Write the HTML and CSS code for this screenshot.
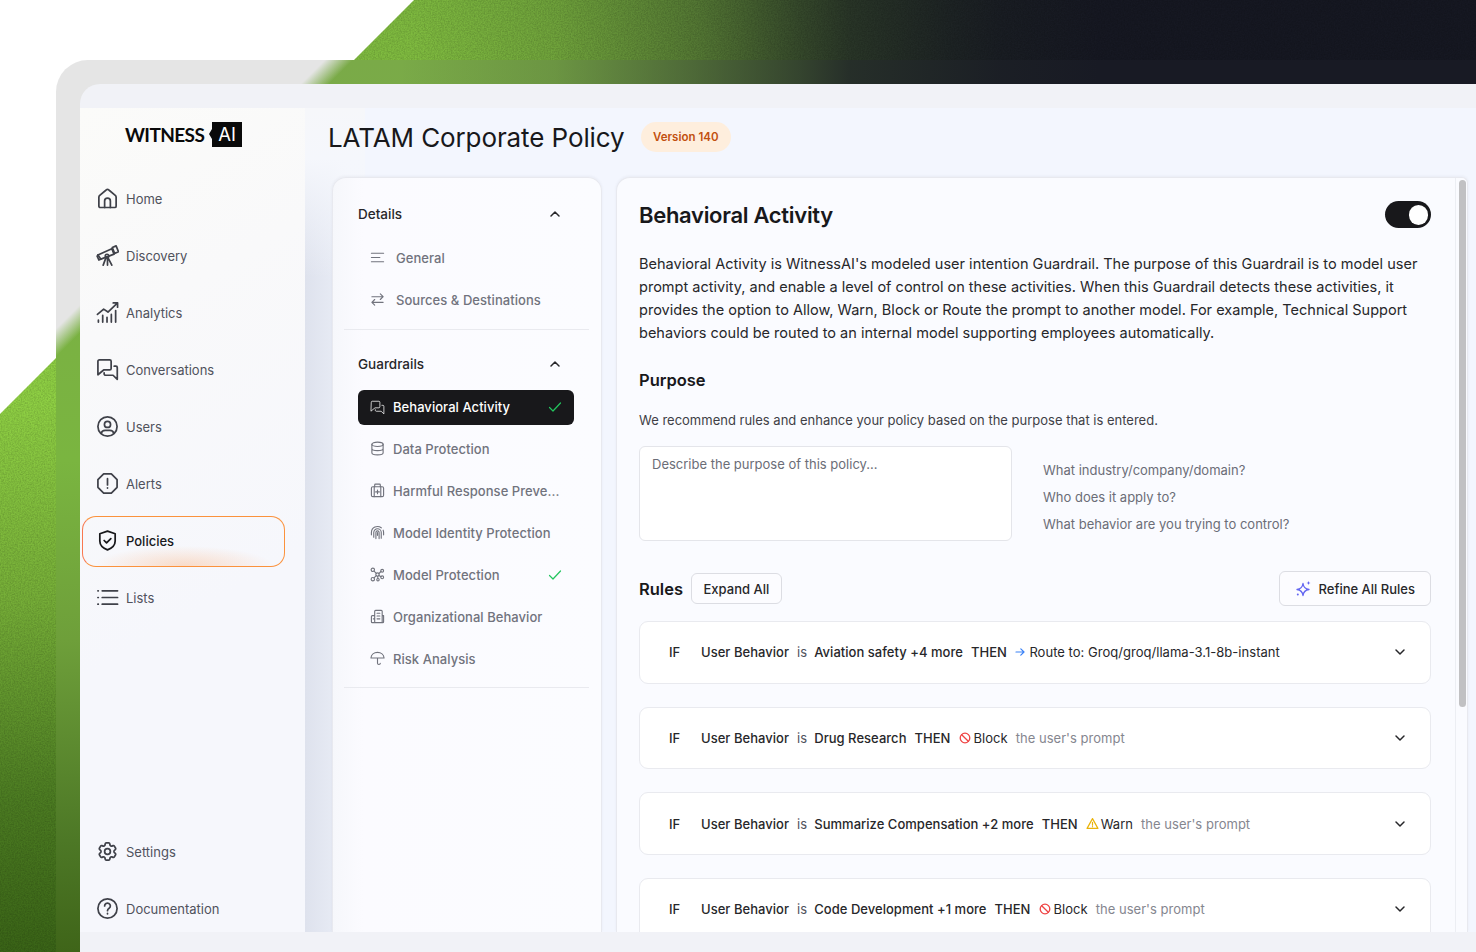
FILE: index.html
```html
<!DOCTYPE html>
<html lang="en">
<head>
<meta charset="utf-8">
<title>LATAM Corporate Policy</title>
<link rel="stylesheet" href="styles.css">
</head>
<body>
<div class="backdrop"></div>
<svg class="noise" width="1476" height="952" aria-hidden="true"><filter id="grain"><feTurbulence type="fractalNoise" baseFrequency="0.7" numOctaves="2" seed="4"/><feColorMatrix values="0 0 0 0 0  0 0 0 0 0  0 0 0 0 0  0.9 0 0 0 -0.28"/></filter><rect width="1476" height="952" filter="url(#grain)"/></svg>
<div class="frame">
  <div class="window">
    <div class="app">
      <aside class="sidebar">
        <div class="logo"><span class="logo-word">WITNESS</span><span class="logo-ai">AI</span></div>
        <nav class="nav">
          <a class="nav-item"><svg class="nav-icon" viewBox="0 0 24 24"><path d="M3 20V10.600c0-.8.3-1.400.9-1.900l6.700-5.600c.8-.7 2-.7 2.800 0l6.700 5.600c.6.5.9 1.100.9 1.900V20c0 .8-.6 1.400-1.400 1.400H4.400C3.600 21.400 3 20.800 3 20Z"/><path d="M9 21.400V14.500c0-1.700 1.300-3 3-3s3 1.300 3 3v6.900"/></svg>Home</a>
          <a class="nav-item"><svg class="nav-icon" viewBox="0 0 24 24"><path d="M2 11.500 16.500 5l2.300 5.600-13.700 5.200Z"/><path d="M17 3.700 21 2l2.400 6-4 1.800ZM2 11.500l-.8 1.200 1.800 4 1.900-.8M10.500 14l-3 8M12 13.500l4.500 8.500M12 13.500V22"/><circle cx="11.500" cy="12.500" r="1.800"/></svg>Discovery</a>
          <a class="nav-item"><svg class="nav-icon" viewBox="0 0 24 24"><path d="M1.500 14 8 8.500l4.500 3L22.500 2M18 2h4.500v4.500M2.500 22v-2M7 22v-7M11.500 22v-5M16 22v-8M20.500 22V10"/></svg>Analytics</a>
          <a class="nav-item"><svg class="nav-icon" viewBox="0 0 24 24"><path d="M2 3.500C2 2.700 2.600 2 3.500 2h10.800c.8 0 1.500.7 1.500 1.500V11c0 .8-.7 1.500-1.500 1.500H8L2 17.500Z"/><path d="M19 8.500h1.800c.8 0 1.400.6 1.400 1.400v12.300L17.800 18H10c-.8 0-1.500-.6-1.500-1.400V15.500"/></svg>Conversations</a>
          <a class="nav-item"><svg class="nav-icon" viewBox="0 0 24 24"><circle cx="12" cy="12" r="10"/><circle cx="12" cy="9.800" r="3.200"/><path d="M5.500 19.200c.4-2 2-3.200 4-3.200h5c2 0 3.600 1.200 4 3.200"/></svg>Users</a>
          <a class="nav-item"><svg class="nav-icon" viewBox="0 0 24 24"><path d="M8 2h8l6 6v8l-6 6H8l-6-6V8Z"/><path d="M12 7v6.500M12 16.500v.3"/></svg>Alerts</a>
          <a class="nav-item is-active"><svg class="nav-icon" viewBox="0 0 24 24"><path d="M12 2.200 20 5v7.500c0 4.500-3.300 7.500-8 9.300-4.700-1.800-8-4.800-8-9.300V5Z"/><path d="m8.500 12 2.500 2.500 4.500-4.500"/></svg>Policies</a>
          <a class="nav-item"><svg class="nav-icon" viewBox="0 0 24 24"><path d="M6.500 5h16M6.500 12h16M6.500 19h16M2 5h.4M2 12h.4M2 19h.4"/></svg>Lists</a>
          <a class="nav-item nav-bottom"><svg class="nav-icon" viewBox="0 0 24 24"><path d="M9.594 3.940c.09-.542.56-.94 1.110-.94h2.593c.55 0 1.020.398 1.110.94l.213 1.281c.063.374.313.686.645.87.074.04.147.083.22.127.325.196.72.257 1.075.124l1.217-.456a1.125 1.125 0 0 1 1.370.49l1.296 2.247a1.125 1.125 0 0 1-.26 1.431l-1.003.827c-.293.241-.438.613-.43.992a7.723 7.723 0 0 1 0 .255c-.008.378.137.75.43.991l1.004.827c.424.35.534.955.26 1.430l-1.298 2.247a1.125 1.125 0 0 1-1.369.491l-1.217-.456c-.355-.133-.75-.072-1.076.124a6.470 6.470 0 0 1-.22.128c-.331.183-.581.495-.644.869l-.213 1.281c-.09.543-.56.94-1.110.94h-2.594c-.55 0-1.019-.398-1.110-.94l-.213-1.281c-.062-.374-.312-.686-.644-.87a6.520 6.520 0 0 1-.22-.127c-.325-.196-.72-.257-1.076-.124l-1.217.456a1.125 1.125 0 0 1-1.369-.49l-1.297-2.247a1.125 1.125 0 0 1 .26-1.431l1.004-.827c.292-.24.437-.613.43-.991a6.932 6.932 0 0 1 0-.255c.007-.38-.138-.751-.43-.992l-1.004-.827a1.125 1.125 0 0 1-.26-1.430l1.297-2.247a1.125 1.125 0 0 1 1.370-.491l1.216.456c.356.133.751.072 1.076-.124.072-.044.146-.086.22-.128.332-.183.582-.495.644-.869l.214-1.280Z"/><circle cx="12" cy="12" r="3"/></svg>Settings</a>
          <a class="nav-item"><svg class="nav-icon" viewBox="0 0 24 24"><circle cx="12" cy="12" r="10"/><path d="M9 9.300a3 3 0 1 1 4.700 2.500c-1 .7-1.700 1.300-1.700 2.500M12 17.200v.3"/></svg>Documentation</a>
        </nav>
      </aside>
      <main class="main">
        <header class="page-head">
          <h1 class="page-title">LATAM Corporate Policy</h1>
          <span class="version">Version 140</span>
        </header>
        <div class="columns">
          <section class="menu-card">
            <div class="menu-head"><span>Details</span><svg class="chev" viewBox="0 0 12 12"><path d="m2 8 4-4 4 4"/></svg></div>
            <ul class="menu-list menu-list-details">
              <li class="menu-item menu-item-wide"><svg class="mi" viewBox="0 0 16 16"><path d="M1.500 3.500h13M1.500 8h9M1.500 12.500h13"/></svg>General</li>
              <li class="menu-item menu-item-wide"><svg class="mi" viewBox="0 0 16 16"><path d="M2 5h12M11 2l3 3-3 3M14 11H2M5 8l-3 3 3 3"/></svg>Sources &amp; Destinations</li>
            </ul>
            <hr class="menu-rule menu-rule-first">
            <div class="menu-head"><span>Guardrails</span><svg class="chev" viewBox="0 0 12 12"><path d="m2 8 4-4 4 4"/></svg></div>
            <ul class="menu-list menu-list-guard">
              <li class="menu-item is-current"><svg class="mi" viewBox="0 0 24 24"><path d="M2 3.500C2 2.700 2.600 2 3.500 2h10.800c.8 0 1.500.7 1.500 1.500V11c0 .8-.7 1.500-1.500 1.500H8L2 17.500Z"/><path d="M19 8.500h1.800c.8 0 1.400.6 1.400 1.400v12.300L17.800 18H10c-.8 0-1.500-.6-1.500-1.400V15.500"/></svg><span class="mt">Behavioral Activity</span><svg class="check" viewBox="0 0 14 14"><path d="m1.500 7.500 3.500 3.500 7.500-8"/></svg></li>
              <li class="menu-item"><svg class="mi" viewBox="0 0 16 16"><ellipse cx="8" cy="3.500" rx="6" ry="2.300"/><path d="M2 3.500v9c0 1.300 2.700 2.300 6 2.300s6-1 6-2.300v-9M2 8c0 1.300 2.700 2.300 6 2.300s6-1 6-2.300"/></svg><span class="mt">Data Protection</span></li>
              <li class="menu-item"><svg class="mi" viewBox="0 0 16 16"><rect x="1.500" y="4" width="13" height="10.500" rx="1.500"/><path d="M5 4V2c0-.5.4-.8.8-.8h4.400c.4 0 .8.3.8.8v2M4.500 4v10.500M11.500 4v10.500M8 7.500v4M6 9.500h4"/></svg><span class="mt">Harmful Response Preve...</span></li>
              <li class="menu-item"><svg class="mi" viewBox="0 0 16 16"><path d="M1.500 10.500V8a6.500 6.500 0 0 1 10.500-5M14.500 10.500V8c0-.9-.2-1.700-.5-2.500M4 13V8a4 4 0 0 1 8 0v6M6.300 14.500V8a1.700 1.700 0 0 1 3.400 0v6.500M8 8v3"/></svg><span class="mt">Model Identity Protection</span></li>
              <li class="menu-item"><svg class="mi" viewBox="0 0 16 16"><circle cx="3" cy="3" r="1.800"/><circle cx="13" cy="4" r="1.500"/><circle cx="3" cy="13" r="1.800"/><circle cx="13" cy="11" r="1.500"/><circle cx="8.500" cy="13.500" r="1.300"/><circle cx="8" cy="8" r="1.800"/><path d="m4.300 4.300 2.400 2.400M11.600 4.800 9.500 7M6.700 9.300l-2.400 2.400M9.500 9l2.300 1.300M8.200 9.800l.2 2.400"/></svg><span class="mt">Model Protection</span><svg class="check" viewBox="0 0 14 14"><path d="m1.500 7.500 3.500 3.500 7.500-8"/></svg></li>
              <li class="menu-item"><svg class="mi" viewBox="0 0 16 16"><path d="M5 14.500V2.500c0-.6.4-1 1-1h6c.6 0 1 .4 1 1v12M5 7H2.500c-.6 0-1 .4-1 1v5.500c0 .6.4 1 1 1h11c.6 0 1-.4 1-1V7h-1.500M7.500 4.500h3M7.500 7.500h3M7.500 10.500h3M3.500 10.500H5"/></svg><span class="mt">Organizational Behavior</span></li>
              <li class="menu-item"><svg class="mi" viewBox="0 0 16 16"><path d="M1 7.500C1.300 4 4.300 1.500 8 1.500s6.700 2.500 7 6Zm7 0V13c0 1.800 3 1.800 3 0"/></svg><span class="mt">Risk Analysis</span></li>
            </ul>
            <hr class="menu-rule menu-rule-last">
          </section>
          <section class="detail-card">
            <div class="detail-head">
              <h2 class="detail-title">Behavioral Activity</h2>
              <span class="toggle"><span class="toggle-knob"></span></span>
            </div>
            <p class="intro">Behavioral Activity is WitnessAI's modeled user intention Guardrail. The purpose of this Guardrail is to model user prompt activity, and enable a level of control on these activities. When this Guardrail detects these activities, it provides the option to Allow, Warn, Block or Route the prompt to another model. For example, Technical Support behaviors could be routed to an internal model supporting employees automatically.</p>
            <h3 class="purpose-title">Purpose</h3>
            <p class="purpose-sub">We recommend rules and enhance your policy based on the purpose that is entered.</p>
            <div class="purpose-row">
              <div class="purpose-box">Describe the purpose of this policy...</div>
              <ul class="hints">
                <li>What industry/company/domain?</li>
                <li>Who does it apply to?</li>
                <li>What behavior are you trying to control?</li>
              </ul>
            </div>
            <div class="rules-head">
              <h3 class="rules-title">Rules</h3>
              <button class="btn btn-expand">Expand All</button>
              <button class="btn btn-refine"><svg class="spark" viewBox="0 0 16 16"><path d="M7 2.500c.5 4 2 5.500 6 6-4 .5-5.500 2-6 6-.5-4-2-5.500-6-6 4-.5 5.500-2 6-6Z"/><path class="spark-dot" d="m12.500 0 .6 1.400 1.400.6-1.400.6-.6 1.400-.6-1.400-1.400-.6 1.400-.6ZM1.800 12.500a1 1 0 1 1 0 2 1 1 0 0 1 0-2Z"/></svg>Refine All Rules</button>
            </div>
            <div class="rule"><span class="kw-if">IF</span><span class="r-dark">User Behavior</span><span class="r-is">is</span><span class="r-dark">Aviation safety +4 more</span><span class="r-dark">THEN</span><svg class="act-route" viewBox="0 0 10 10"><path d="M1 5h8M5.800 1.800 9 5 5.800 8.200"/></svg><span class="r-action">Route to: Groq/groq/llama-3.1-8b-instant</span><svg class="rule-chev" viewBox="0 0 12 12"><path d="m2 4 4 4 4-4"/></svg></div>
            <div class="rule"><span class="kw-if">IF</span><span class="r-dark">User Behavior</span><span class="r-is">is</span><span class="r-dark">Drug Research</span><span class="r-dark">THEN</span><svg class="act-block" viewBox="0 0 12 12"><circle cx="6" cy="6" r="4.800"/><path d="M2.700 2.700l6.600 6.600"/></svg><span class="r-action">Block</span><span class="r-muted">the user's prompt</span><svg class="rule-chev" viewBox="0 0 12 12"><path d="m2 4 4 4 4-4"/></svg></div>
            <div class="rule"><span class="kw-if">IF</span><span class="r-dark">User Behavior</span><span class="r-is">is</span><span class="r-dark">Summarize Compensation +2 more</span><span class="r-dark">THEN</span><svg class="act-warn" viewBox="0 0 12 12"><path d="M6 1.500 11 10.500H1ZM6 5v2.500M6 8.800v.2"/></svg><span class="r-action">Warn</span><span class="r-muted">the user's prompt</span><svg class="rule-chev" viewBox="0 0 12 12"><path d="m2 4 4 4 4-4"/></svg></div>
            <div class="rule"><span class="kw-if">IF</span><span class="r-dark">User Behavior</span><span class="r-is">is</span><span class="r-dark">Code Development +1 more</span><span class="r-dark">THEN</span><svg class="act-block" viewBox="0 0 12 12"><circle cx="6" cy="6" r="4.800"/><path d="M2.700 2.700l6.600 6.600"/></svg><span class="r-action">Block</span><span class="r-muted">the user's prompt</span><svg class="rule-chev" viewBox="0 0 12 12"><path d="m2 4 4 4 4-4"/></svg></div>
            <span class="scroll-thumb"></span>
          </section>
        </div>
      </main>
    </div>
  </div>
</div>
</body>
</html>
```
FILE: styles.css
```css
* { box-sizing: border-box; }
html, body { margin: 0; height: 952px; overflow: hidden; background: #fff; }
body { position: relative; font-family: Inter, "Liberation Sans", sans-serif; color: #18181b; }

.backdrop {
  position: absolute; inset: 0;
  clip-path: polygon(414px 0, 1476px 0, 1476px 952px, 0 952px, 0 414px);
  background:
    linear-gradient(90deg, rgba(22,24,34,0) 414px, rgba(22,24,34,.15) 555px, rgba(22,24,34,.42) 700px, rgba(22,24,34,.7) 800px, rgba(22,24,34,.82) 850px, rgba(22,24,34,.93) 950px, rgba(22,24,34,.97) 1000px, #161822 1100px),
    linear-gradient(180deg, #7db83f 0, #8fd044 400px, #76ae38 600px, #4c7c22 800px, #3a6417 952px);
}
.noise { position: absolute; left: 0; top: 0; clip-path: polygon(414px 0, 1476px 0, 1476px 952px, 0 952px, 0 414px); opacity: .32; }

.frame {
  position: relative;
  margin: 60px 0 0 56px; width: 1420px; height: 892px;
  padding: 24px 0 0 24px;
  border-radius: 32px 0 0 0;
  overflow: hidden;
  background:
    linear-gradient(135deg, #e5e5e5 190px, rgba(229,229,229,0) 210px),
    linear-gradient(90deg, rgba(24,26,36,0) 344px, rgba(24,26,36,.15) 499px, rgba(24,26,36,.47) 644px, rgba(24,26,36,.71) 744px, rgba(24,26,36,.86) 794px, rgba(24,26,36,.97) 944px, #181a24 1044px),
    linear-gradient(180deg, #7aaa48 0, #7ab540 400px, #6e9f3a 580px, #4d7826 780px, #3f6519 892px);
}
.window {
  height: 868px; padding: 24px 0 20px;
  background: #f1f2f7; border-radius: 20px 0 0 0;
}
.app { display: flex; height: 824px; }

.sidebar {
  width: 225px; flex: none; padding: 2px 20px 0 2px;
  background: linear-gradient(150deg, #fbfbf9 0, #f9f9fa 25%, #f6f7fc 60%, #f6f7fc 100%);
}
.logo { display: flex; align-items: center; gap: 7px; margin: 12px 0 0 43px; height: 25px; }
.logo-word { width: 80px; font: 700 19px/25px Lato, "Liberation Sans", sans-serif; letter-spacing: -.6px; color: #0a0a0a; white-space: nowrap; }
.logo-ai {
  position: relative; width: 30px; height: 25px; background: #0a0a0a; color: #fff;
  font: 400 18.500px/25px Inter, sans-serif; text-align: center;
}
.logo-ai::before {
  content: ""; position: absolute; left: -3px; top: 7px; width: 3px; height: 10px;
  background: #0a0a0a; clip-path: polygon(100% 0, 0 50%, 100% 100%);
}
.nav { display: flex; flex-direction: column; gap: 6px; margin-top: 27px; }
.nav-item {
  display: flex; align-items: center; gap: 7.500px; height: 51px; padding: 0 0 2px 15px;
  font-size: 13px; color: #50525c; border: 1px solid transparent; border-radius: 14px;
}
.nav-icon { width: 23px; height: 23px; flex: none; fill: none; stroke: #3f4149; stroke-width: 1.800; stroke-linecap: round; stroke-linejoin: round; margin-left: -2.500px; }
.nav-item.is-active {
  color: #18181b; font-weight: 500;
  border-color: #fb923c; border-left-color: #f97850;
  background: radial-gradient(ellipse 90px 20px at 50% 100%, rgba(251,180,130,.42), rgba(251,180,130,0));
}
.nav-item.is-active .nav-icon { stroke: #18181b; }
.nav-bottom { margin-top: 197px; }

.main {
  flex: 1; min-width: 0; display: flex; flex-direction: column; padding-left: 23px;
  overflow: hidden;
  background:
    linear-gradient(90deg, rgba(222,226,237,1) 0, rgba(222,226,237,.6) 27px, rgba(222,226,237,0) 40px) 0 0 / 40px 100% no-repeat,
    #f3f6fe;
  position: relative;
}
.main::before {
  content: ""; position: absolute; left: 0; top: 0; width: 60px; height: 170px;
  background: linear-gradient(180deg, #f6f7fa 0, #f5f7fc 50px, rgba(245,247,252,0) 170px);
}
.page-head { position: relative; display: flex; align-items: center; gap: 16px; height: 58px; margin-bottom: 11px; flex: none; }
.page-title { margin: 0; font-size: 26px; font-weight: 400; letter-spacing: -.1px; color: #18181b; }
.version {
  display: block; height: 30px; line-height: 30px; padding: 0 12.500px; border-radius: 15px;
  background: #feeedd; color: #c2500f; font-size: 11.500px; font-weight: 600;
}
.columns { position: relative; display: flex; gap: 14px; flex: 1; min-height: 0; padding: 0 8px 0 4px; }

.menu-card {
  width: 270px; flex: none; padding: 24px 12px 0 11px;
  background: linear-gradient(90deg, #f6f7fb 0, #fbfbff 30px, #fbfcff 100%);
  border: 1px solid #e8e9ef; border-bottom: 0; border-radius: 14px 14px 0 0;
  box-shadow: 0 -1px 3px rgba(30,35,60,.05);
}
.menu-head {
  display: flex; align-items: center; justify-content: space-between;
  height: 24px; padding: 0 28px 0 14px;
  font-size: 13.500px; font-weight: 500; color: #27272a;
}
.chev { width: 12px; height: 12px; fill: none; stroke: #27272a; stroke-width: 1.500; stroke-linecap: round; stroke-linejoin: round; }
.menu-list { list-style: none; margin: 0; padding: 0 0 0 14px; }
.menu-list-details { margin-top: 14px; }
.menu-item {
  display: flex; align-items: center; height: 35px; margin-top: 7px; padding: 0 12px;
  font-size: 13px; letter-spacing: .05px; font-weight: 500; color: #71737d; border-radius: 6px; width: 216px;
}
.menu-list-guard .menu-item { padding-bottom: 2px; }
.mi { width: 15px; height: 15px; flex: none; margin-right: 8px; fill: none; stroke: #71737d; stroke-width: 1.200; stroke-linecap: round; stroke-linejoin: round; }
.menu-item-wide .mi { margin-right: 11px; }
.mt { flex: 1; white-space: nowrap; }
.check { width: 14px; height: 14px; flex: none; fill: none; stroke: #22c55e; stroke-width: 1.200; stroke-linecap: round; stroke-linejoin: round; }
.menu-list-guard .is-current { background: #18181b; color: #fff; margin-top: 14px; padding-bottom: 1px; }
.is-current .mi { stroke: #fff; }
.menu-rule { border: 0; border-top: 1px solid #e9eaef; margin: 0; }
.menu-rule-first { margin: 12px 0 22px; }
.menu-rule-last { margin-top: 10px; }

.detail-card {
  position: relative; flex: 1; min-width: 0; padding: 23px 36px 0 22px; overflow: hidden;
  background: #fafbff; border: 1px solid #e8e9ef; border-bottom: 0;
  border-radius: 14px 6px 0 0;
  box-shadow: 0 -1px 3px rgba(30,35,60,.05);
}
.detail-head { display: flex; align-items: center; justify-content: space-between; height: 27px; }
.detail-title { margin: 0; font-size: 22px; font-weight: 600; letter-spacing: -.3px; color: #18181b; }
.toggle { display: block; position: relative; width: 46px; height: 27px; border-radius: 14px; background: #18181b; }
.toggle-knob { position: absolute; right: 3px; top: 4px; width: 19.500px; height: 19.500px; border-radius: 50%; background: #fff; }
.intro { margin: 25px 0 0; font-size: 14.540px; line-height: 23px; color: #27272a; }
.purpose-title { margin: 23px 0 0; font-size: 16.500px; line-height: 24px; font-weight: 600; color: #18181b; }
.purpose-sub { margin: 17.500px 0 0; font-size: 13px; line-height: 20px; color: #3f3f46; }
.purpose-row { display: flex; gap: 31px; margin-top: 16.500px; }
.purpose-box {
  width: 373px; height: 95px; padding: 9px 12px; font-size: 13px; line-height: 17px; color: #6b6d77;
  background: #fff; border: 1px solid #e4e5ea; border-radius: 6px;
}
.hints { list-style: none; margin: 10.500px 0 0; padding: 0; font-size: 13px; line-height: 27px; color: #6b6d77; }
.rules-head { display: flex; align-items: center; gap: 8px; height: 35px; margin-top: 30px; }
.rules-title { margin: 0; font-size: 16.500px; font-weight: 600; color: #18181b; }
.btn {
  font: 500 13px/20px Inter, sans-serif; color: #27272a; background: #fcfcff;
  border: 1px solid #dcdde3; border-radius: 6px; padding: 0 11.500px; display: flex; align-items: center;
}
.btn-expand { height: 31px; }
.btn-refine { height: 35px; margin-left: auto; padding: 0 15px 0 16.500px; gap: 6.500px; }
.spark { width: 16px; height: 16px; fill: none; stroke: #6366f1; stroke-width: 1.300; stroke-linejoin: round; }
.spark-dot { fill: #6366f1; stroke: none; }
.rule {
  display: flex; align-items: center; height: 62.700px; margin-top: 15px; padding: 0 24px 0 29px;
  background: #fff; border: 1px solid #e9eaef; border-radius: 9px;
  font-size: 13px; letter-spacing: .03px; font-weight: 500; color: #27272a; white-space: nowrap;
}
.rule + .rule { margin-top: 23px; }
.kw-if { width: 32px; font-weight: 500; }
.r-dark { margin-right: 8px; }
.r-is { margin-right: 7.200px; font-weight: 400; color: #50525c; }
.r-action { margin-right: 8px; font-weight: 400; color: #27272a; }
.r-muted { font-weight: 400; color: #85868f; }
.act-route, .act-block, .act-warn { flex: none; fill: none; stroke-linecap: round; stroke-linejoin: round; }
.act-route { width: 10px; height: 10px; margin: 0 4px 0 .5px; stroke: #3b82f6; stroke-width: 1.200; }
.act-block { width: 12px; height: 12px; margin: 0 2px 0 1px; stroke: #ef4444; stroke-width: 1.300; }
.act-warn { width: 13px; height: 13px; margin-right: 2px; stroke: #eab308; stroke-width: 1.100; }
.rule-chev { width: 12px; height: 12px; margin-left: auto; fill: none; stroke: #27272a; stroke-width: 1.500; stroke-linecap: round; stroke-linejoin: round; }
.scroll-thumb { position: absolute; right: 1px; top: 2px; width: 7px; height: 527px; border-radius: 4px; background: #c1c1c3; }
.detail-card::after { content: ""; position: absolute; right: 11px; top: 0; bottom: 0; width: 1px; background: #eceef3; }
```
